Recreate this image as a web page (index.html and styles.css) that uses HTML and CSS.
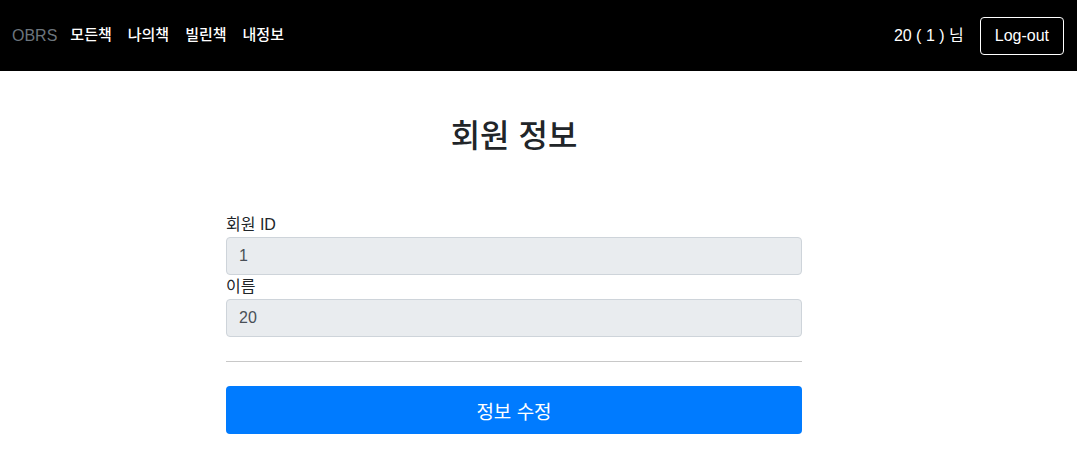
FILE: index.html
```
<!DOCTYPE html>
<html lang="ko">
  <head>
    <meta charset="UTF-8" />
    <meta name="viewport" content="width=device-width, initial-scale=1.0" />
    <title>OBRS - 회원 정보</title>
    <link rel="stylesheet" href="styles.css">
  </head>
  <body>
    <nav class="navbar">
      <div class="nav-left">
        <a class="brand" href="#">OBRS</a>
        <a class="nav-link" href="#">모든책</a>
        <a class="nav-link" href="#">나의책</a>
        <a class="nav-link" href="#">빌린책</a>
        <a class="nav-link" href="#">내정보</a>
      </div>
      <div class="nav-right">
        <span class="user">20 ( 1 ) 님</span>
        <button class="btn-logout">Log-out</button>
      </div>
    </nav>

    <div class="container">
      <h2 class="title">회원 정보</h2>
      <form class="info-form">
        <label for="userId">회원 ID</label>
        <input id="userId" class="form-control" type="text" value="1" readonly />
        <label for="userName">이름</label>
        <input id="userName" class="form-control" type="text" value="20" readonly />
        <hr />
        <button type="button" class="btn-primary">정보 수정</button>
      </form>
    </div>
  </body>
</html>
```

FILE: styles.css
```
* {
  padding: 0;
  margin: 0;
  box-sizing: border-box;
}
body {
  font-family: "Liberation Sans", "Noto Sans CJK KR", sans-serif;
  font-size: 16px;
  line-height: 1.5;
  color: #212529;
  background: #fff;
}
a {
  text-decoration: none;
}

/* navbar */
.navbar {
  height: 71px;
  background: #000;
  display: flex;
  align-items: center;
  justify-content: space-between;
  padding: 0 13px 0 12px;
}
.nav-left {
  display: flex;
  align-items: center;
}
.brand {
  color: #6c757d;
  font-size: 16px;
  margin-right: 5px;
}
.nav-link {
  color: #fff;
  font-size: 15px;
  font-weight: 500;
  padding: 0 8px;
}
.nav-right {
  display: flex;
  align-items: center;
  gap: 16px;
}
.user {
  color: #fff;
}
.btn-logout {
  font-family: inherit;
  font-size: 16px;
  line-height: 1.5;
  color: #fff;
  background: transparent;
  border: 1px solid #fff;
  border-radius: 4px;
  padding: 6px 14px;
  cursor: pointer;
}

/* content */
.container {
  width: 576px;
  margin-left: 226px;
}
.title {
  font-size: 32px;
  font-weight: 500;
  line-height: 1.2;
  text-align: center;
  margin: 46px 0 58px;
}
.info-form label {
  display: block;
}
.form-control {
  display: block;
  width: 100%;
  height: 38px;
  padding: 6px 12px;
  font-family: inherit;
  font-size: 16px;
  color: #495057;
  background: #e9ecef;
  border: 1px solid #ced4da;
  border-radius: 4px;
}
.info-form hr {
  border: none;
  border-top: 1px solid #c8c8c8;
  margin: 24px 0;
}
.btn-primary {
  display: block;
  width: 100%;
  height: 48px;
  font-family: inherit;
  font-size: 19px;
  color: #fff;
  background: #007bff;
  border: none;
  border-radius: 4px;
  cursor: pointer;
}
```
